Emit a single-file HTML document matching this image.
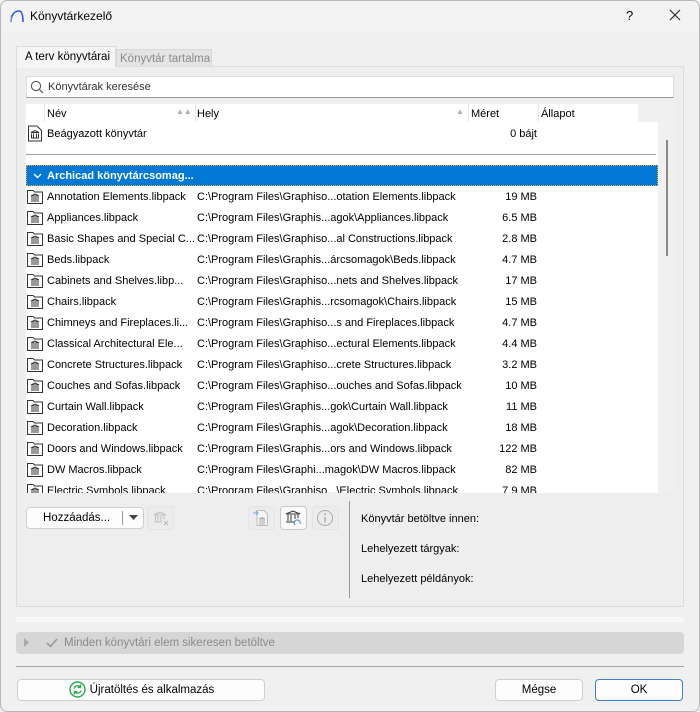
<!DOCTYPE html>
<html><head><meta charset="utf-8"><style>
*{box-sizing:border-box;margin:0;padding:0}
body{width:700px;height:712px;background:#f0f0f0;font-family:"Liberation Sans",sans-serif;font-size:11px;color:#000;position:relative;overflow:hidden}
.win{position:absolute;left:0;top:0;width:700px;height:712px;background:#f0f0f0;overflow:hidden}
.frame{position:absolute;left:0;top:0;width:700px;height:712px;border:1px solid #b8b8b8;border-radius:7px;pointer-events:none}
.title{position:absolute;left:0;top:0;width:700px;height:31px;background:#f3f3f3}
.abs{position:absolute}
.panel{position:absolute;left:16px;top:66px;width:668px;height:541px;border:1px solid #dcdcdc;background:#eeeeee}
.tab{position:absolute;font-size:11.5px}
.list{position:absolute;left:26px;top:104px;width:632px;height:389px;background:#fff;overflow:hidden}
.row{position:absolute;left:0;width:632px;height:21px;line-height:22px;white-space:nowrap}
.row .n{position:absolute;left:21px;width:148px;overflow:hidden}
.row .h{position:absolute;left:171px}
.row .s{position:absolute;left:444px;width:67px;text-align:right}
.ic{position:absolute;left:1px;top:3px;width:16px;height:15px}
.btn{position:absolute;background:#fdfdfd;border:1px solid #cfcfcf;border-radius:4px;text-align:center;font-size:11.5px}
.sbtn{position:absolute;width:27px;height:24px;border-radius:4px;background:#ececec;border:1px solid #e4e4e4}
</style></head><body><div class="win">
<div class="title"></div>
<svg class="abs" style="left:9px;top:9px" width="16" height="14" viewBox="0 0 16 14"><path d="M2 13 C2 5 6 2 10 2 C13 2 14 6 14 13" fill="none" stroke="#2d5bd8" stroke-width="1.6"/><path d="M2 13 V6" stroke="#aab" stroke-width="1"/></svg>
<div class="abs" style="left:30px;top:9px;font-size:12px">Könyvtárkezelő</div>
<div class="abs" style="left:626px;top:8px;font-size:13px">?</div>
<svg class="abs" style="left:669px;top:9px" width="12" height="12"><path d="M1 1L11 11M11 1L1 11" stroke="#222" stroke-width="1.1"/></svg>

<div class="abs" style="left:16px;top:46px;width:100px;height:22px;background:#f5f5f5;border:1px solid #dcdcdc;border-bottom:none"></div>
<div class="abs" style="left:116px;top:49px;width:96px;height:18px;background:#e4e4e4;border:1px solid #d8d8d8;border-bottom:none"></div>
<div class="panel"></div>
<div class="abs" style="left:17px;top:66px;width:98px;height:2px;background:#f5f5f5"></div>
<div class="tab" style="left:25px;top:51px">A terv könyvtárai</div>
<div class="tab" style="left:120px;top:53px;color:#8a8a8a">Könyvtár tartalma</div>

<div class="abs" style="left:26px;top:76px;width:648px;height:22px;background:#fff;border:1px solid #dcdcdc;border-bottom:1px solid #9a9a9a"></div>
<svg class="abs" style="left:30px;top:80px" width="14" height="14"><circle cx="6" cy="6" r="4.6" fill="none" stroke="#555" stroke-width="1.1"/><path d="M9.3 9.3L13 13" stroke="#555" stroke-width="1.2"/></svg>
<div class="abs" style="left:48px;top:81px;color:#333">Könyvtárak keresése</div>

<div class="list">
 <div class="abs" style="left:0;top:0;width:632px;height:18px;background:#fff"></div>
 <div class="abs" style="left:18px;top:0;width:1px;height:18px;background:#e6e6e6"></div>
 <div class="abs" style="left:169px;top:0;width:1px;height:18px;background:#e6e6e6"></div>
 <div class="abs" style="left:442px;top:0;width:1px;height:18px;background:#e6e6e6"></div>
 <div class="abs" style="left:512px;top:0;width:1px;height:18px;background:#e6e6e6"></div>
 <div class="abs" style="left:612px;top:0;width:1px;height:18px;background:#e6e6e6"></div>
 <div class="abs" style="left:612px;top:0;width:20px;height:18px;background:#f0f0f0"></div>
 <div class="abs" style="left:21px;top:4px">Név</div>
 <div class="abs" style="left:150px;top:3px;color:#aaa;font-size:8px">▲▲</div>
 <div class="abs" style="left:171px;top:4px">Hely</div>
 <div class="abs" style="left:430px;top:3px;color:#aaa;font-size:8px">▲</div>
 <div class="abs" style="left:445px;top:4px">Méret</div>
 <div class="abs" style="left:515px;top:4px">Állapot</div>
 <div class="row" style="top:19px">
  <svg class="ic" viewBox="0 0 16 16" style="top:2px;height:17px"><path d="M1.5 .5H10L14.5 5V15.5H1.5Z" fill="#fff" stroke="#333"/><path d="M4 7L8 5 12 7ZM4.5 8V12M6.5 8V12M9.5 8V12M11.5 8V12M4 12.5H12" stroke="#333" fill="none"/></svg>
  <span class="n">Beágyazott könyvtár</span><span class="s">0 bájt</span></div>
 <div class="abs" style="left:0;top:50px;width:630px;height:1px;background:#a0a0a0"></div>
 <div class="row" style="top:61px;background:#0078d4;color:#fff;font-weight:bold;border:1px dotted #f0a040">
  <svg class="abs" style="left:6px;top:7px" width="9" height="6"><path d="M1 1L4.5 4.5 8 1" stroke="#fff" stroke-width="1.4" fill="none"/></svg>
  <span class="abs" style="left:20px;top:-1px">Archicad könyvtárcsomag...</span></div>
 <div id="rows"></div>
</div>
<div class="abs" style="left:658px;top:104px;width:16px;height:389px;background:#f0f0f0"></div>
<div class="abs" style="left:666px;top:140px;width:2px;height:116px;background:#888"></div>

<div class="btn" style="left:26px;top:507px;width:118px;height:22px;line-height:20px;text-align:left;padding-left:16px">Hozzáadás...</div>
<div class="abs" style="left:122px;top:511px;width:1px;height:14px;background:#999"></div>
<svg class="abs" style="left:129px;top:515px" width="9" height="5"><path d="M0 0H9L4.5 5Z" fill="#444"/></svg>
<div class="sbtn" style="left:147px;top:506px"></div>
<svg class="abs" style="left:152px;top:509px" width="18" height="18" viewBox="0 0 18 18"><path d="M2 6L8 3 14 6ZM3.5 7V12M6 7V12M9 7V12M12 7V10M2 13H10M12 12L16 16M16 12L12 16" stroke="#bbb" fill="none"/></svg>
<div class="sbtn" style="left:248px;top:506px"></div>
<svg class="abs" style="left:252px;top:509px" width="18" height="18" viewBox="0 0 18 18"><path d="M5 1.5H12L15.5 5V16.5H5Z" fill="#f5f5f5" stroke="#bbb"/><path d="M1 4H6M4 2L6 4 4 6" stroke="#7aa7e0" fill="none"/><path d="M7 10L10 8.5 13 10ZM8 11V14M10 11V14M12 11V14M7 15H13" stroke="#aaa" fill="none"/></svg>
<div class="sbtn" style="left:280px;top:506px;background:#fafafa;border-color:#c8c8c8"></div>
<svg class="abs" style="left:284px;top:509px" width="18" height="18" viewBox="0 0 18 18"><path d="M2 5L9 2 16 5ZM4 6V12M7 6V12M11 6V10M14 6V9M2 13H10" stroke="#333" fill="none"/><path d="M11 16A3 3 0 1 1 16 15" stroke="#3a7bd5" fill="none"/></svg>
<div class="sbtn" style="left:312px;top:506px"></div>
<svg class="abs" style="left:316px;top:509px" width="18" height="18"><circle cx="9" cy="9" r="7.5" fill="none" stroke="#aaa"/><path d="M9 8V13.5" stroke="#aaa" stroke-width="1.4"/><circle cx="9" cy="5.3" r="1" fill="#aaa"/></svg>

<div class="abs" style="left:349px;top:501px;width:1px;height:97px;background:#999"></div>
<div class="abs" style="left:361px;top:513px">Könyvtár betöltve innen:</div>
<div class="abs" style="left:361px;top:543px">Lehelyezett tárgyak:</div>
<div class="abs" style="left:361px;top:573px">Lehelyezett példányok:</div>

<div class="abs" style="left:16px;top:617px;width:668px;height:5px;background:#f8f8f8"></div>
<div class="abs" style="left:16px;top:632px;width:668px;height:22px;background:#d6d6d6;border-radius:4px"></div>
<svg class="abs" style="left:24px;top:638px" width="6" height="9"><path d="M0 0L5 4.5 0 9Z" fill="#aaa"/></svg>
<svg class="abs" style="left:46px;top:638px" width="12" height="10"><path d="M1 5L4.5 8.5 11 1" stroke="#999" stroke-width="1.6" fill="none"/></svg>
<div class="abs" style="left:64px;top:637px;color:#8a8a8a;font-size:11.5px">Minden könyvtári elem sikeresen betöltve</div>
<div class="abs" style="left:16px;top:666px;width:668px;height:1px;background:#a5a5a5"></div>

<div class="btn" style="left:17px;top:679px;width:248px;height:22px;line-height:20px"><span style="padding-left:22px">Újratöltés és alkalmazás</span></div>
<svg class="abs" style="left:69px;top:681px" width="17" height="17" viewBox="0 0 17 17"><circle cx="8.5" cy="8.5" r="7.5" fill="none" stroke="#2aa84a" stroke-width="1.4"/><path d="M5 7.5A3.7 3.7 0 0 1 11.5 6.3M11.5 3.5V6.5H8.7M12 9.5A3.7 3.7 0 0 1 5.5 10.7M5.5 13.5V10.5H8.3" stroke="#2aa84a" stroke-width="1.3" fill="none"/></svg>
<div class="btn" style="left:495px;top:679px;width:88px;height:22px;line-height:20px">Mégse</div>
<div class="btn" style="left:595px;top:679px;width:88px;height:22px;line-height:20px;border-color:#3f7fcf">OK</div>
</div>
<div class="frame"></div>
<script>
var d=[["Annotation Elements.libpack","C:\\Program Files\\Graphiso...otation Elements.libpack","19 MB"],
["Appliances.libpack","C:\\Program Files\\Graphis...agok\\Appliances.libpack","6.5 MB"],
["Basic Shapes and Special C...","C:\\Program Files\\Graphiso...al Constructions.libpack","2.8 MB"],
["Beds.libpack","C:\\Program Files\\Graphis...árcsomagok\\Beds.libpack","4.7 MB"],
["Cabinets and Shelves.libp...","C:\\Program Files\\Graphiso...nets and Shelves.libpack","17 MB"],
["Chairs.libpack","C:\\Program Files\\Graphis...rcsomagok\\Chairs.libpack","15 MB"],
["Chimneys and Fireplaces.li...","C:\\Program Files\\Graphiso...s and Fireplaces.libpack","4.7 MB"],
["Classical Architectural Ele...","C:\\Program Files\\Graphiso...ectural Elements.libpack","4.4 MB"],
["Concrete Structures.libpack","C:\\Program Files\\Graphiso...crete Structures.libpack","3.2 MB"],
["Couches and Sofas.libpack","C:\\Program Files\\Graphiso...ouches and Sofas.libpack","10 MB"],
["Curtain Wall.libpack","C:\\Program Files\\Graphis...gok\\Curtain Wall.libpack","11 MB"],
["Decoration.libpack","C:\\Program Files\\Graphis...agok\\Decoration.libpack","18 MB"],
["Doors and Windows.libpack","C:\\Program Files\\Graphis...ors and Windows.libpack","122 MB"],
["DW Macros.libpack","C:\\Program Files\\Graphi...magok\\DW Macros.libpack","82 MB"],
["Electric Symbols.libpack","C:\\Program Files\\Graphiso...\\Electric Symbols.libpack","7.9 MB"]];
var h="",ic='<svg class="ic" viewBox="0 0 16 15"><path d="M.5 1.5H6L7.5 3H15.5V14.5H.5Z" fill="#fff" stroke="#333"/><path d="M4 7L8 5 12 7ZM5 8V11M7 8V11M9 8V11M11 8V11M4 12H12" stroke="#333" fill="none"/></svg>';
d.forEach(function(r,i){h+='<div class="row" style="top:'+(82+i*21)+'px">'+ic+'<span class="n">'+r[0]+'</span><span class="h">'+r[1]+'</span><span class="s">'+r[2]+'</span></div>'});
document.getElementById("rows").innerHTML=h;
</script>
</body></html>
